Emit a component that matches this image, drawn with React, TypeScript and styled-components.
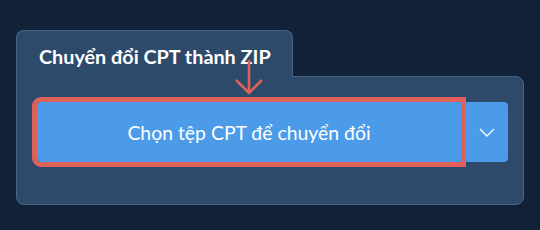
import styled, { createGlobalStyle } from "styled-components";

const GlobalStyle = createGlobalStyle`
  html, body {
    margin: 0;
    padding: 0;
    background: #112238;
    font-family: Lato, "Noto Sans", sans-serif;
  }
`;

const Page = styled.div`
  width: 540px;
  height: 230px;
  padding: 30px 16px 0 16px;
  box-sizing: border-box;
`;

const Card = styled.div`
  display: flex;
  flex-direction: column;
  align-items: flex-start;
  width: 508px;
`;

const Tab = styled.div`
  position: relative;
  z-index: 1;
  margin-bottom: -1px;
  height: 47px;
  width: 277px;
  padding: 3px 0 0 22px;
  box-sizing: border-box;
  display: flex;
  align-items: center;
  background: #2d4a6b;
  border: 1px solid #4b6585;
  border-bottom: none;
  border-radius: 8px 8px 0 0;
  color: #ffffff;
  font-size: 19.8px;
  font-weight: 700;
  white-space: nowrap;
`;

const Panel = styled.div`
  position: relative;
  align-self: stretch;
  height: 129px;
  box-sizing: border-box;
  padding: 25px 15px 0 20px;
  background: #2d4a6b;
  border: 1px solid #4b6585;
  border-radius: 0 8px 8px 8px;
`;

const ButtonGroup = styled.div`
  display: flex;
  height: 60px;
`;

const MainButton = styled.button`
  flex: 1;
  position: relative;
  z-index: 1;
  border: none;
  background: #4c9be8;
  color: #ffffff;
  font-family: Lato, "Noto Sans", sans-serif;
  font-size: 19.4px;
  font-weight: 400;
  border-radius: 4px 0 0 4px;
  outline: 5px solid #e0605a;
  outline-offset: 0;
  cursor: pointer;
`;

const MenuButton = styled.button`
  width: 47px;
  border: none;
  background: #4c9be8;
  border-radius: 0 4px 4px 0;
  display: flex;
  align-items: center;
  justify-content: center;
  padding: 0 0 0 4px;
  cursor: pointer;
`;

const Arrow = styled.svg`
  position: absolute;
  left: 217px;
  top: -17px;
  z-index: 2;
  overflow: visible;
`;

export default function App() {
  return (
    <>
      <GlobalStyle />
      <Page>
        <Card>
          <Tab>Chuyển đổi CPT thành ZIP</Tab>
          <Panel>
            <Arrow width="30" height="40" viewBox="0 0 30 40">
              <line x1="15" y1="0" x2="15" y2="34" stroke="#e0605a" strokeWidth="2.6" />
              <polyline
                points="2,20 15,33 28,20"
                fill="none"
                stroke="#e0605a"
                strokeWidth="2.6"
              />
            </Arrow>
            <ButtonGroup>
              <MainButton>Chọn tệp CPT để chuyển đổi</MainButton>
              <MenuButton>
                <svg width="16" height="9" viewBox="0 0 16 9">
                  <polyline
                    points="1,1 8,8 15,1"
                    fill="none"
                    stroke="#ffffff"
                    strokeWidth="1.3"
                  />
                </svg>
              </MenuButton>
            </ButtonGroup>
          </Panel>
        </Card>
      </Page>
    </>
  );
}
